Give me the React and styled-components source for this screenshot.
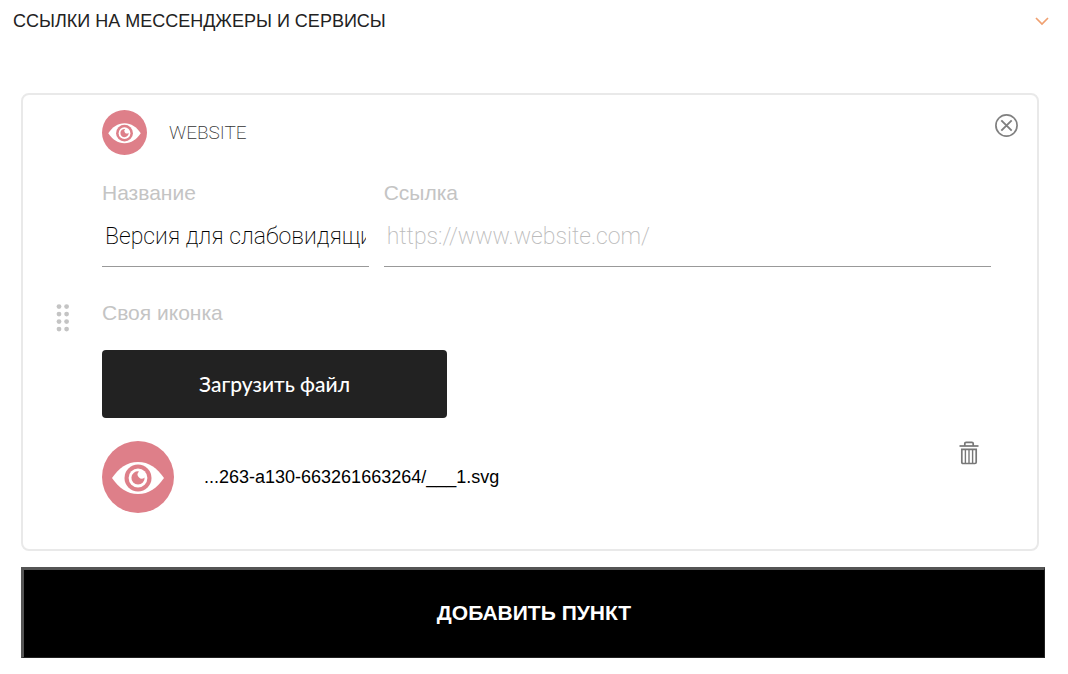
import React, { useState } from "react";
import styled, { createGlobalStyle } from "styled-components";

const sans = `"Liberation Sans", Arial, sans-serif`;
const light = `Roboto, "Liberation Sans", sans-serif`;

const GlobalStyle = createGlobalStyle`
  *, *::before, *::after { box-sizing: border-box; }
  body { margin: 0; background: #fff; color: #000; font-family: ${sans}; }
  button, input { font: inherit; color: inherit; }
`;

const Section = styled.section`
  padding: 0 23px 16px 21px;
`;

const Heading = styled.h2`
  margin: 0 -4px 51px -8px;
  font-size: 18px;
  font-weight: 400;
`;

const HeadingToggle = styled.button`
  display: flex;
  align-items: center;
  justify-content: space-between;
  width: 100%;
  height: 42px;
  padding: 0;
  border: 0;
  background: none;
  color: #222;
  text-align: left;
  cursor: pointer;
`;

const Card = styled.div`
  display: grid;
  grid-template-columns: 79px 1fr 46px;
  margin: 0 6px 16px 0;
  padding: 15px 0 36px;
  border: 2px solid #e9e9e9;
  border-radius: 8px;
`;

const DragHandle = styled.button`
  align-self: center;
  justify-self: center;
  display: block;
  padding: 0;
  margin-top: 16px;
  border: 0;
  background: none;
  cursor: grab;
`;

const Content = styled.div`
  min-width: 0;
`;

const Actions = styled.div`
  display: flex;
  flex-direction: column;
  align-items: flex-start;
`;

const IconButton = styled.button`
  display: block;
  flex: none;
  padding: 0;
  border: 0;
  background: none;
  line-height: 0;
  cursor: pointer;
`;

const CloseButton = styled(IconButton)`
  margin: 4px 0 0 4px;
`;

const DeleteButton = styled(IconButton)`
  align-self: flex-start;
  margin-right: 12px;
`;

const Service = styled.div`
  display: flex;
  align-items: center;
  gap: 22px;
  margin-bottom: 24px;
`;

const ServiceName = styled.span`
  color: #333;
  font-family: ${light};
  font-size: 19px;
  font-weight: 200;
`;

const Fields = styled.div`
  display: flex;
  gap: 15px;
  margin-bottom: 32px;
`;

const Field = styled.div`
  flex: ${(p) => (p.$narrow ? "0 0 30%" : "1 1 0")};
  min-width: 0;
`;

const Caption = styled.label`
  display: block;
  color: #c4c4c4;
  font-size: 21px;
  line-height: 28px;
`;

const TextInput = styled.input`
  display: block;
  width: 100%;
  height: 60px;
  padding: 0 3px;
  border: 0;
  border-bottom: 1px solid #999;
  border-radius: 0;
  outline: 0;
  background: none;
  font-family: ${light};
  font-size: 23px;
  font-weight: 200;
  &::placeholder { color: #bbb; opacity: 1; }
`;

const UploadButton = styled.button`
  display: block;
  width: 345px;
  max-width: 100%;
  height: 68px;
  margin: 23px 0;
  padding: 0 0 2px;
  border: 0;
  border-radius: 4px;
  background: #222;
  color: #fff;
  font-family: Lato, "Liberation Sans", sans-serif;
  font-size: 21px;
  font-weight: 500;
  cursor: pointer;
`;

const FileRow = styled.div`
  display: flex;
  align-items: center;
  gap: 30px;
`;

const FileName = styled.span`
  flex: 1;
  font-size: 18px;
`;

const AddButton = styled.button`
  display: block;
  width: 100%;
  height: 91px;
  padding: 0 0 2px;
  border-style: solid;
  border-width: 3px 1px 1px 3px;
  border-color: #555 #222 #222 #555;
  background: #000;
  color: #fff;
  font-size: 21px;
  font-weight: 700;
  cursor: pointer;
`;

function EyeBadge({ size }) {
  return (
    <svg width={size} height={size} viewBox="0 0 72 72" aria-hidden="true">
      <circle cx="36" cy="36" r="36" fill="#de7f89" />
      <path d="M10 37C17 27 25 21 36 21s19 6 26 16C55 47 47 53 36 53S17 47 10 37Z" fill="#fff" />
      <circle cx="36" cy="37" r="13.5" fill="#de7f89" />
      <circle cx="36" cy="37" r="9.4" fill="#fff" />
      <path d="M37 30.4A6.6 6.6 0 1 0 42.6 36.4A3.6 3.6 0 1 1 37 30.4Z" fill="#de7f89" />
    </svg>
  );
}

function Chevron() {
  return (
    <svg width="14" height="10" viewBox="0 0 14 10" fill="none" stroke="#f0a070" strokeWidth="1.7" aria-hidden="true">
      <path d="M1 2l6 6 6-6" />
    </svg>
  );
}

function CloseIcon() {
  return (
    <svg width="23" height="23" viewBox="0 0 23 23" fill="none" stroke="#808080" strokeWidth="1.7" aria-hidden="true">
      <circle cx="11.5" cy="11.5" r="10.6" />
      <path d="M6.3 6.3l10.4 10.4M16.7 6.3L6.3 16.7" strokeWidth="1.9" />
    </svg>
  );
}

function TrashIcon() {
  return (
    <svg width="20" height="24" viewBox="0 0 20 24" fill="none" stroke="#777" strokeWidth="1.7" aria-hidden="true">
      <path d="M.5 5h19" />
      <path d="M5.8 5V2.6q0-1.3 1.3-1.3h5.8q1.3 0 1.3 1.3V5" />
      <path d="M2.8 8.3h14.4v12.9q0 1.3-1.3 1.3H4.1q-1.3 0-1.3-1.3Z" />
      <path d="M6.4 8v14M10 8v14M13.6 8v14" strokeWidth="1.4" />
    </svg>
  );
}

function Dots() {
  return (
    <svg width="14" height="28" viewBox="0 0 14 28" fill="#c4c4c4" aria-hidden="true">
      {[2.6, 10.1, 17.6, 25.1].map((y) => (
        <React.Fragment key={y}>
          <circle cx="3" cy={y} r="2.4" />
          <circle cx="10.6" cy={y} r="2.4" />
        </React.Fragment>
      ))}
    </svg>
  );
}

export default function App() {
  const [title, setTitle] = useState("Версия для слабовидящих");
  const [link, setLink] = useState("");

  return (
    <>
      <GlobalStyle />
      <Section>
        <Heading>
          <HeadingToggle type="button" aria-expanded="true">
            ССЫЛКИ НА МЕССЕНДЖЕРЫ И СЕРВИСЫ
            <Chevron />
          </HeadingToggle>
        </Heading>
        <Card>
          <DragHandle type="button" aria-label="Переместить">
            <Dots />
          </DragHandle>
          <Content>
            <Service>
              <EyeBadge size={45} />
              <ServiceName>WEBSITE</ServiceName>
            </Service>
            <Fields>
              <Field $narrow>
                <Caption htmlFor="title">Название</Caption>
                <TextInput id="title" value={title} onChange={(e) => setTitle(e.target.value)} />
              </Field>
              <Field>
                <Caption htmlFor="link">Ссылка</Caption>
                <TextInput
                  id="link"
                  type="url"
                  placeholder="https://www.website.com/"
                  value={link}
                  onChange={(e) => setLink(e.target.value)}
                />
              </Field>
            </Fields>
            <Caption htmlFor="upload">Своя иконка</Caption>
            <UploadButton id="upload" type="button">Загрузить файл</UploadButton>
            <FileRow>
              <EyeBadge size={72} />
              <FileName>...263-a130-663261663264/___1.svg</FileName>
              <DeleteButton type="button" aria-label="Удалить файл">
                <TrashIcon />
              </DeleteButton>
            </FileRow>
          </Content>
          <Actions>
            <CloseButton type="button" aria-label="Удалить пункт">
              <CloseIcon />
            </CloseButton>
          </Actions>
        </Card>
        <AddButton type="button">ДОБАВИТЬ ПУНКТ</AddButton>
      </Section>
    </>
  );
}
